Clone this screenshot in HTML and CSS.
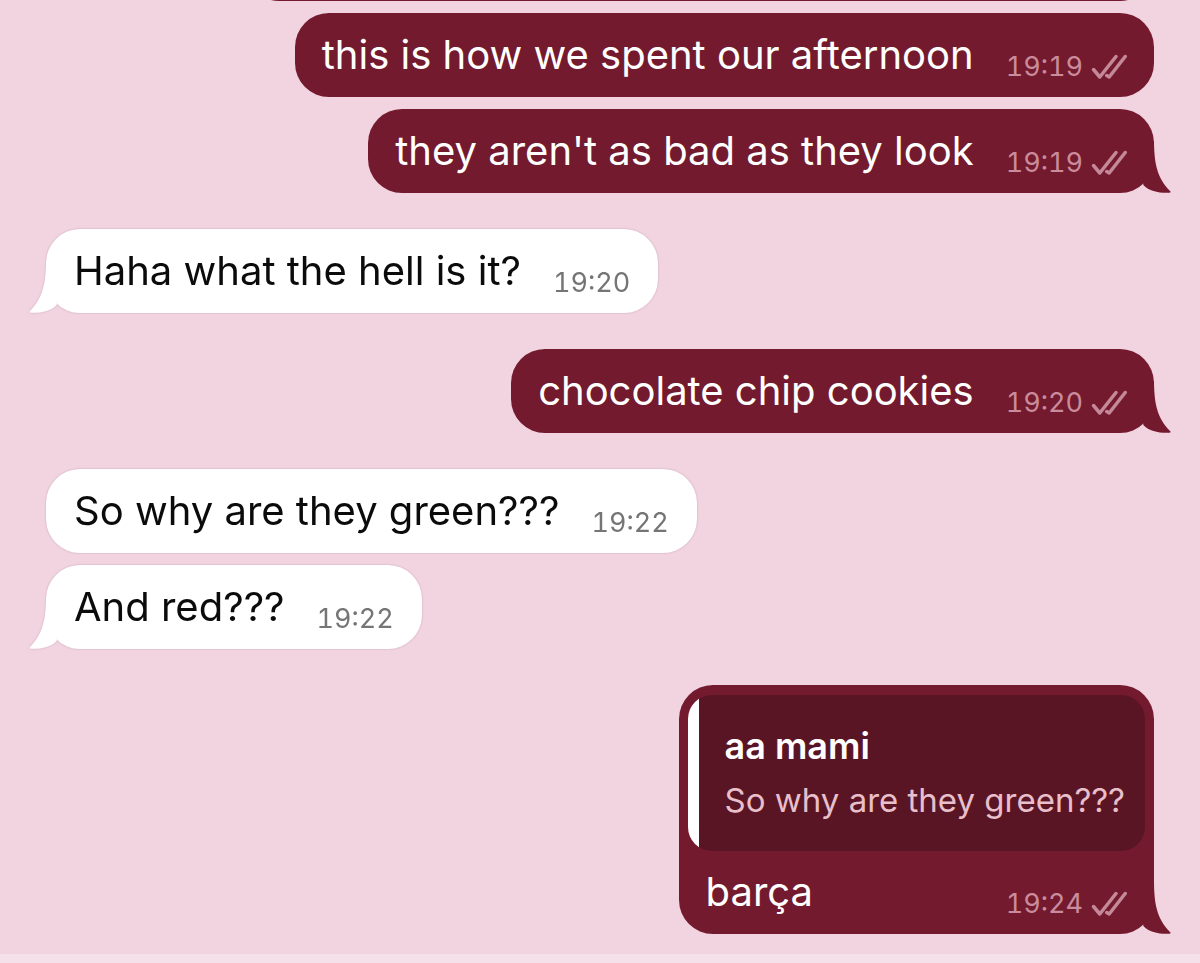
FILE: index.html
```
<!DOCTYPE html>
<html lang="en">
<head>
<meta charset="utf-8">
<meta name="viewport" content="width=device-width, initial-scale=1">
<title>Chat</title>
<link rel="stylesheet" href="styles.css">
</head>
<body>
<svg class="defs" aria-hidden="true">
  <symbol id="tail" viewBox="0 0 34 52"><path d="M6 0H17C17.300 20 19 36 33.500 50.500C34 51.500 33 51.800 31 51.800C21 52 12 50 6.300 44Z"/></symbol>
  <symbol id="ticks" viewBox="0 0 36 26"><path d="M2.500 15.500L8.800 23L25 2.500M15.800 21.500L18.200 23L34.200 2.500"/></symbol>
</svg>
<main class="chat">
  <ol class="messages">
    <li class="bubble out clipped"></li>
    <li class="bubble out">
      <p class="text">this is how we spent our afternoon</p>
      <span class="meta"><time>19:19</time><svg class="ticks" role="img" aria-label="Read"><use href="#ticks"/></svg></span>
    </li>
    <li class="bubble out">
      <p class="text">they aren't as bad as they look</p>
      <span class="meta"><time>19:19</time><svg class="ticks" role="img" aria-label="Read"><use href="#ticks"/></svg></span>
      <svg class="tail" aria-hidden="true"><use href="#tail"/></svg>
    </li>
    <li class="bubble in turn">
      <p class="text">Haha what the hell is it?</p>
      <span class="meta"><time>19:20</time></span>
      <svg class="tail" aria-hidden="true"><use href="#tail"/></svg>
    </li>
    <li class="bubble out turn">
      <p class="text">chocolate chip cookies</p>
      <span class="meta"><time>19:20</time><svg class="ticks" role="img" aria-label="Read"><use href="#ticks"/></svg></span>
      <svg class="tail" aria-hidden="true"><use href="#tail"/></svg>
    </li>
    <li class="bubble in turn">
      <p class="text">So why are they green???</p>
      <span class="meta"><time>19:22</time></span>
    </li>
    <li class="bubble in">
      <p class="text">And red???</p>
      <span class="meta"><time>19:22</time></span>
      <svg class="tail" aria-hidden="true"><use href="#tail"/></svg>
    </li>
    <li class="bubble out turn reply">
      <blockquote class="quote">
        <strong class="quote-name">aa mami</strong>
        <p class="quote-text">So why are they green???</p>
      </blockquote>
      <p class="text">barça</p>
      <span class="meta"><time>19:24</time><svg class="ticks" role="img" aria-label="Read"><use href="#ticks"/></svg></span>
      <svg class="tail" aria-hidden="true"><use href="#tail"/></svg>
    </li>
  </ol>
  <div class="footer"></div>
</main>
</body>
</html>
```
FILE: styles.css
```
* {
  box-sizing: border-box;
}

body {
  margin: 0;
  background: #f2d4e0;
  font-family: Inter, "Liberation Sans", sans-serif;
}

p,
blockquote {
  margin: 0;
}

.defs {
  position: absolute;
  width: 0;
  height: 0;
}

/* The list is anchored to the bottom; older messages run off the top. */
.chat {
  display: flex;
  flex-direction: column;
  justify-content: flex-end;
  height: 100vh;
  overflow: hidden;
}

.messages {
  display: flex;
  flex-direction: column;
  flex: none;
  gap: 12px;
  margin: 0;
  padding: 0 46px 20px;
  list-style: none;
}

.bubble {
  position: relative;
  display: grid;
  grid-template-columns: auto auto;
  column-gap: 32px;
  min-height: 84px;
  max-width: 90%;
  padding: 18px 27px;
  border-radius: 34px;
}

.out {
  align-self: flex-end;
  background: #731a2e;
  color: #fff;
  fill: #731a2e;
}

.in {
  align-self: flex-start;
  padding: 18px 28px;
  background: #fff;
  color: #0b0b0b;
  fill: #fff;
  filter: drop-shadow(0 0 1px rgba(120, 70, 95, 0.3));
}

.turn {
  margin-top: 24px;
}

.clipped {
  width: 82%;
}

.text {
  font-size: 40px;
  line-height: 48px;
}

.meta {
  display: flex;
  align-items: center;
  align-self: end;
  justify-self: end;
  gap: 8px;
  height: 24px;
  font-size: 27px;
  font-variant-numeric: tabular-nums;
  line-height: 24px;
  color: #757577;
}

.out .meta {
  color: #ca8c9c;
}

.ticks {
  width: 36px;
  height: 26px;
  fill: none;
  stroke: #c48898;
  stroke-width: 3.5;
  stroke-linecap: round;
  stroke-linejoin: round;
}

.tail {
  position: absolute;
  bottom: 0;
  right: -17px;
  width: 34px;
  height: 52px;
}

.in .tail {
  right: auto;
  left: -17px;
  transform: scaleX(-1);
}

.reply {
  padding-top: 10px;
}

.quote {
  grid-column: 1 / -1;
  margin: 0 -18px 17px;
  padding: 24px 20px 24px 37px;
  border-radius: 24px;
  background: linear-gradient(to right, #fff 11px, #5a1524 11px);
}

.quote-name {
  display: block;
  font-size: 36px;
  font-weight: 600;
  line-height: 54px;
}

.quote-text {
  font-size: 33px;
  line-height: 54px;
  color: #e8bfca;
}

.footer {
  flex: none;
  height: 9px;
  background: #f4e1e9;
}
```
